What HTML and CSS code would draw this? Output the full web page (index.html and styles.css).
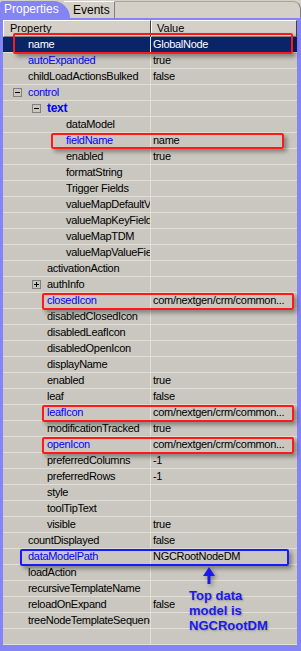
FILE: index.html
```html
<!DOCTYPE html>
<html lang="en">
<head>
    <meta charset="UTF-8">
    <title>Properties</title>
    <link rel="stylesheet" href="styles.css">
</head>
<body>
<div class="panel">
    <div class="tabs">
        <div class="tab active">Properties</div>
        <div class="tab">Events</div>
        <div class="tab-rest"></div>
    </div>
    <div class="frame">
        <div class="row head"><div class="cell">Property</div><div class="val">Value</div></div>
        <div class="row sel"><div class="cell l0">name</div><div class="val">GlobalNode</div></div>
        <div class="row"><div class="cell l0 blue">autoExpanded</div><div class="val">true</div></div>
        <div class="row"><div class="cell l0">childLoadActionsBulked</div><div class="val">false</div></div>
        <div class="row"><div class="cell t0 blue"><span class="tog"></span>control</div><div class="val"></div></div>
        <div class="row"><div class="cell t1 blue bold"><span class="tog"></span>text</div><div class="val"></div></div>
        <div class="row"><div class="cell l2">dataModel</div><div class="val"></div></div>
        <div class="row"><div class="cell l2 blue">fieldName</div><div class="val">name</div></div>
        <div class="row"><div class="cell l2">enabled</div><div class="val">true</div></div>
        <div class="row"><div class="cell l2">formatString</div><div class="val"></div></div>
        <div class="row"><div class="cell l2">Trigger Fields</div><div class="val"></div></div>
        <div class="row"><div class="cell l2">valueMapDefaultValue</div><div class="val"></div></div>
        <div class="row"><div class="cell l2">valueMapKeyField</div><div class="val"></div></div>
        <div class="row"><div class="cell l2">valueMapTDM</div><div class="val"></div></div>
        <div class="row"><div class="cell l2">valueMapValueField</div><div class="val"></div></div>
        <div class="row"><div class="cell l1">activationAction</div><div class="val"></div></div>
        <div class="row"><div class="cell t1"><span class="tog plus"></span>authInfo</div><div class="val"></div></div>
        <div class="row"><div class="cell l1 blue">closedIcon</div><div class="val">com/nextgen/crm/common...</div></div>
        <div class="row"><div class="cell l1">disabledClosedIcon</div><div class="val"></div></div>
        <div class="row"><div class="cell l1">disabledLeafIcon</div><div class="val"></div></div>
        <div class="row"><div class="cell l1">disabledOpenIcon</div><div class="val"></div></div>
        <div class="row"><div class="cell l1">displayName</div><div class="val"></div></div>
        <div class="row"><div class="cell l1">enabled</div><div class="val">true</div></div>
        <div class="row"><div class="cell l1">leaf</div><div class="val">false</div></div>
        <div class="row"><div class="cell l1 blue">leafIcon</div><div class="val">com/nextgen/crm/common...</div></div>
        <div class="row"><div class="cell l1">modificationTracked</div><div class="val">true</div></div>
        <div class="row"><div class="cell l1 blue">openIcon</div><div class="val">com/nextgen/crm/common...</div></div>
        <div class="row"><div class="cell l1">preferredColumns</div><div class="val">-1</div></div>
        <div class="row"><div class="cell l1">preferredRows</div><div class="val">-1</div></div>
        <div class="row"><div class="cell l1">style</div><div class="val"></div></div>
        <div class="row"><div class="cell l1">toolTipText</div><div class="val"></div></div>
        <div class="row"><div class="cell l1">visible</div><div class="val">true</div></div>
        <div class="row"><div class="cell l0">countDisplayed</div><div class="val">false</div></div>
        <div class="row"><div class="cell l0 blue">dataModelPath</div><div class="val">NGCRootNodeDM</div></div>
        <div class="row"><div class="cell l0">loadAction</div><div class="val"></div></div>
        <div class="row"><div class="cell l0">recursiveTemplateName</div><div class="val"></div></div>
        <div class="row"><div class="cell l0">reloadOnExpand</div><div class="val">false</div></div>
        <div class="row"><div class="cell l0">treeNodeTemplateSequence</div><div class="val"></div></div>
        <div class="row"><div class="cell"></div><div class="val"></div></div>
    </div>

    <!-- annotations drawn over the grid -->
    <div class="mark red m-name"></div>
    <div class="mark red m-field"></div>
    <div class="mark red m-closed"></div>
    <div class="mark red m-leaf"></div>
    <div class="mark red m-open"></div>
    <div class="mark blue-box m-path"></div>
    <svg class="arrow" width="14" height="20" viewBox="0 0 14 20">
        <path d="M7 1 L13 10 L8.5 10 L8.5 18 L5.5 18 L5.5 10 L1 10 Z" fill="#1a1af0"/>
    </svg>
    <div class="note">Top data<br>model is<br>NGCRootDM</div>
</div>
</body>
</html>
```

FILE: styles.css
```css
body {
    margin: 0;
    background: #d4d0c8;
    font-family: 'Liberation Sans', Arial, sans-serif;
    font-size: 11px;
}

.panel {
    position: relative;
    width: 301px;
    height: 651px;
    background: #d4d0c8;
    overflow: hidden;
}

.tabs {
    display: flex;
    height: 18px;
}

.tab {
    height: 17px;
    margin-top: 1px;
    line-height: 17px;
    font-size: 12px;
    color: #000;
    padding: 0 4px 0 9px;
    border-top: 1px solid #fff;
    border-right: 1px solid #808080;
    margin-left: -6px;
}

.tab.active {
    position: relative;
    z-index: 1;
    margin-left: 0;
    width: 56px;
    padding: 0 10px 0 4px;
    color: #fff;
    background: #8484f6;
    border: none;
    border-top-left-radius: 3px;
    border-top-right-radius: 18px 18px;
}

.tab-rest {
    flex: 1;
    margin-top: 1px;
    border-top: 1px solid #a8a49c;
    border-right: 1px solid #808080;
    border-top-right-radius: 8px;
}

.frame {
    border-style: solid;
    border-color: #8484f6;
    border-width: 2px 4px 6px 3px;
}

.row {
    display: grid;
    grid-template-columns: 148px 1fr;
    height: 16px;
    box-sizing: border-box;
    border-bottom: 1px solid #e4ded6;
    background: #c9c7bf;
    line-height: 15px;
    letter-spacing: -0.3px;
}

.cell, .val {
    white-space: nowrap;
    overflow: hidden;
    display: flex;
    align-items: center;
}

.cell {
    border-right: 1px solid #e4ded6;
}

.val {
    padding-left: 2px;
}

.row.head {
    height: 17px;
    border-bottom: none;
    background: #d4d0c8;
    letter-spacing: 0;
}

.row.head .cell, .row.head .val {
    border: 1px solid;
    border-color: #fff #404040 #808080 #fff;
    padding-left: 6px;
}

.row.head .val {
    padding-left: 5px;
}

.row.sel {
    background: #0a246a;
    color: #fff;
}

.l0 { padding-left: 25px; }
.l1 { padding-left: 44px; }
.l2 { padding-left: 63px; }
.t0 { padding-left: 10px; }
.t1 { padding-left: 29px; }

.blue { color: #0000ff; }
.bold { font-weight: bold; font-size: 12px; }

.tog {
    position: relative;
    display: inline-block;
    width: 7px;
    height: 7px;
    border: 1px solid #808080;
    margin-right: 6px;
    flex: none;
}

.tog::before {
    content: "";
    position: absolute;
    left: 1px;
    top: 3px;
    width: 5px;
    height: 1px;
    background: #000;
}

.tog.plus::after {
    content: "";
    position: absolute;
    left: 3px;
    top: 1px;
    width: 1px;
    height: 5px;
    background: #000;
}

.mark {
    position: absolute;
    box-sizing: border-box;
    border-radius: 2px;
    box-shadow: 3px 3px 4px rgba(0, 0, 0, 0.35);
}

.mark.red { border: 2px solid #ff1a1a; }
.mark.blue-box { border: 2px solid #1a1aff; }

.m-name { left: 13px; top: 33px; width: 280px; height: 21px; }
.m-field { left: 51px; top: 133px; width: 233px; height: 16px; }
.m-closed { left: 42px; top: 293px; width: 252px; height: 17px; }
.m-leaf { left: 42px; top: 405px; width: 252px; height: 17px; }
.m-open { left: 42px; top: 437px; width: 252px; height: 17px; }
.m-path { left: 20px; top: 549px; width: 269px; height: 17px; }

.arrow {
    position: absolute;
    left: 202px;
    top: 566px;
    filter: drop-shadow(2px 2px 2px rgba(0, 0, 0, 0.35));
}

.note {
    position: absolute;
    left: 189px;
    top: 588px;
    font-size: 13px;
    line-height: 15px;
    font-weight: bold;
    color: #1a1af0;
    text-shadow: 1px 1px 2px rgba(0, 0, 0, 0.25);
}
```
